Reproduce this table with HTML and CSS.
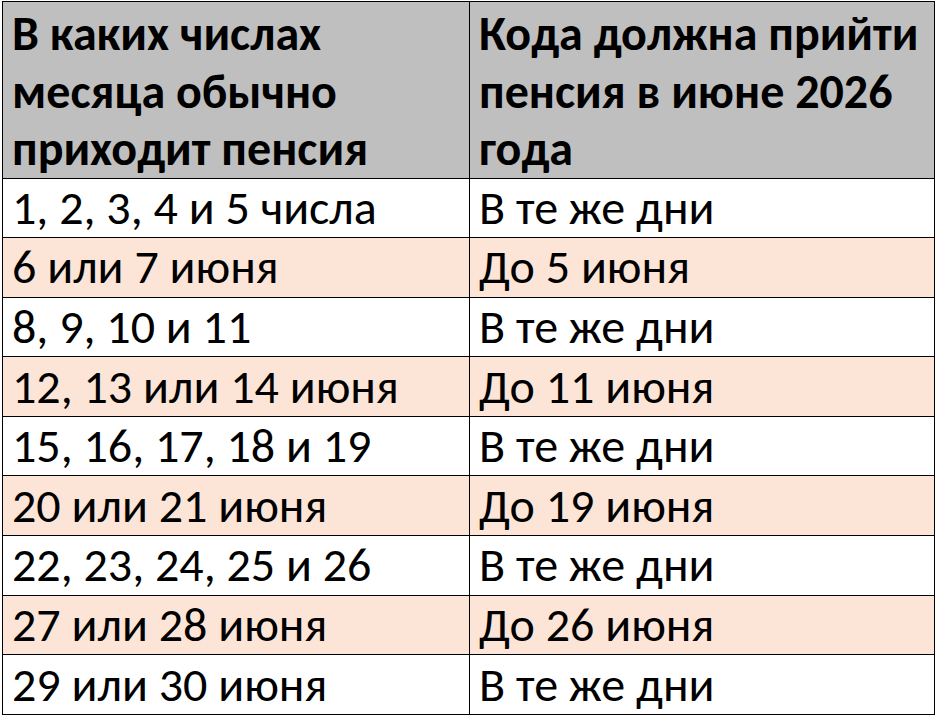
FILE: index.html
```html
<!DOCTYPE html>
<html lang="ru">
<head>
<meta charset="utf-8">
<link rel="stylesheet" href="styles.css">
</head>
<body>
<table class="pension">
  <thead>
    <tr class="head">
      <th class="c1">В каких числах месяца обычно приходит пенсия</th>
      <th class="c2">Кода должна прийти пенсия в июне 2026 года</th>
    </tr>
  </thead>
  <tbody>
    <tr><td>1, 2, 3, 4 и 5 числа</td><td>В те же дни</td></tr>
    <tr class="alt"><td>6 или 7 июня</td><td>До 5 июня</td></tr>
    <tr><td>8, 9, 10 и 11</td><td>В те же дни</td></tr>
    <tr class="alt"><td>12, 13 или 14 июня</td><td>До 11 июня</td></tr>
    <tr><td>15, 16, 17, 18 и 19</td><td>В те же дни</td></tr>
    <tr class="alt"><td>20 или 21 июня</td><td>До 19 июня</td></tr>
    <tr><td>22, 23, 24, 25 и 26</td><td>В те же дни</td></tr>
    <tr class="alt"><td>27 или 28 июня</td><td>До 26 июня</td></tr>
    <tr><td>29 или 30 июня</td><td>В те же дни</td></tr>
  </tbody>
</table>
</body>
</html>
```
FILE: styles.css
```css
html, body {
  margin: 0;
  padding: 0;
  background: #ffffff;
}
body {
  padding: 1px 0 0 2px;
  font-family: Carlito, Calibri, "Open Sans", "Liberation Sans", sans-serif;
  color: #000000;
}
.pension {
  border-collapse: collapse;
  table-layout: fixed;
  width: 933px;
}
.pension th,
.pension td {
  border: 1px solid #000000;
  text-align: left;
  vertical-align: middle;
  padding: 0 8px 0 9px;
  font-size: 48px;
}
.pension th {
  font-weight: bold;
  background: #bfbfbf;
  line-height: 57.5px;
  vertical-align: top;
  padding-top: 3px;
  padding-bottom: 0;
}
.pension td {
  height: 58.6px;
  line-height: 58px;
  padding-top: 0;
  padding-bottom: 0;
  white-space: nowrap;
}
.pension .c1 { width: 449px; }
.pension .alt td { background: #fce4d6; }
```
